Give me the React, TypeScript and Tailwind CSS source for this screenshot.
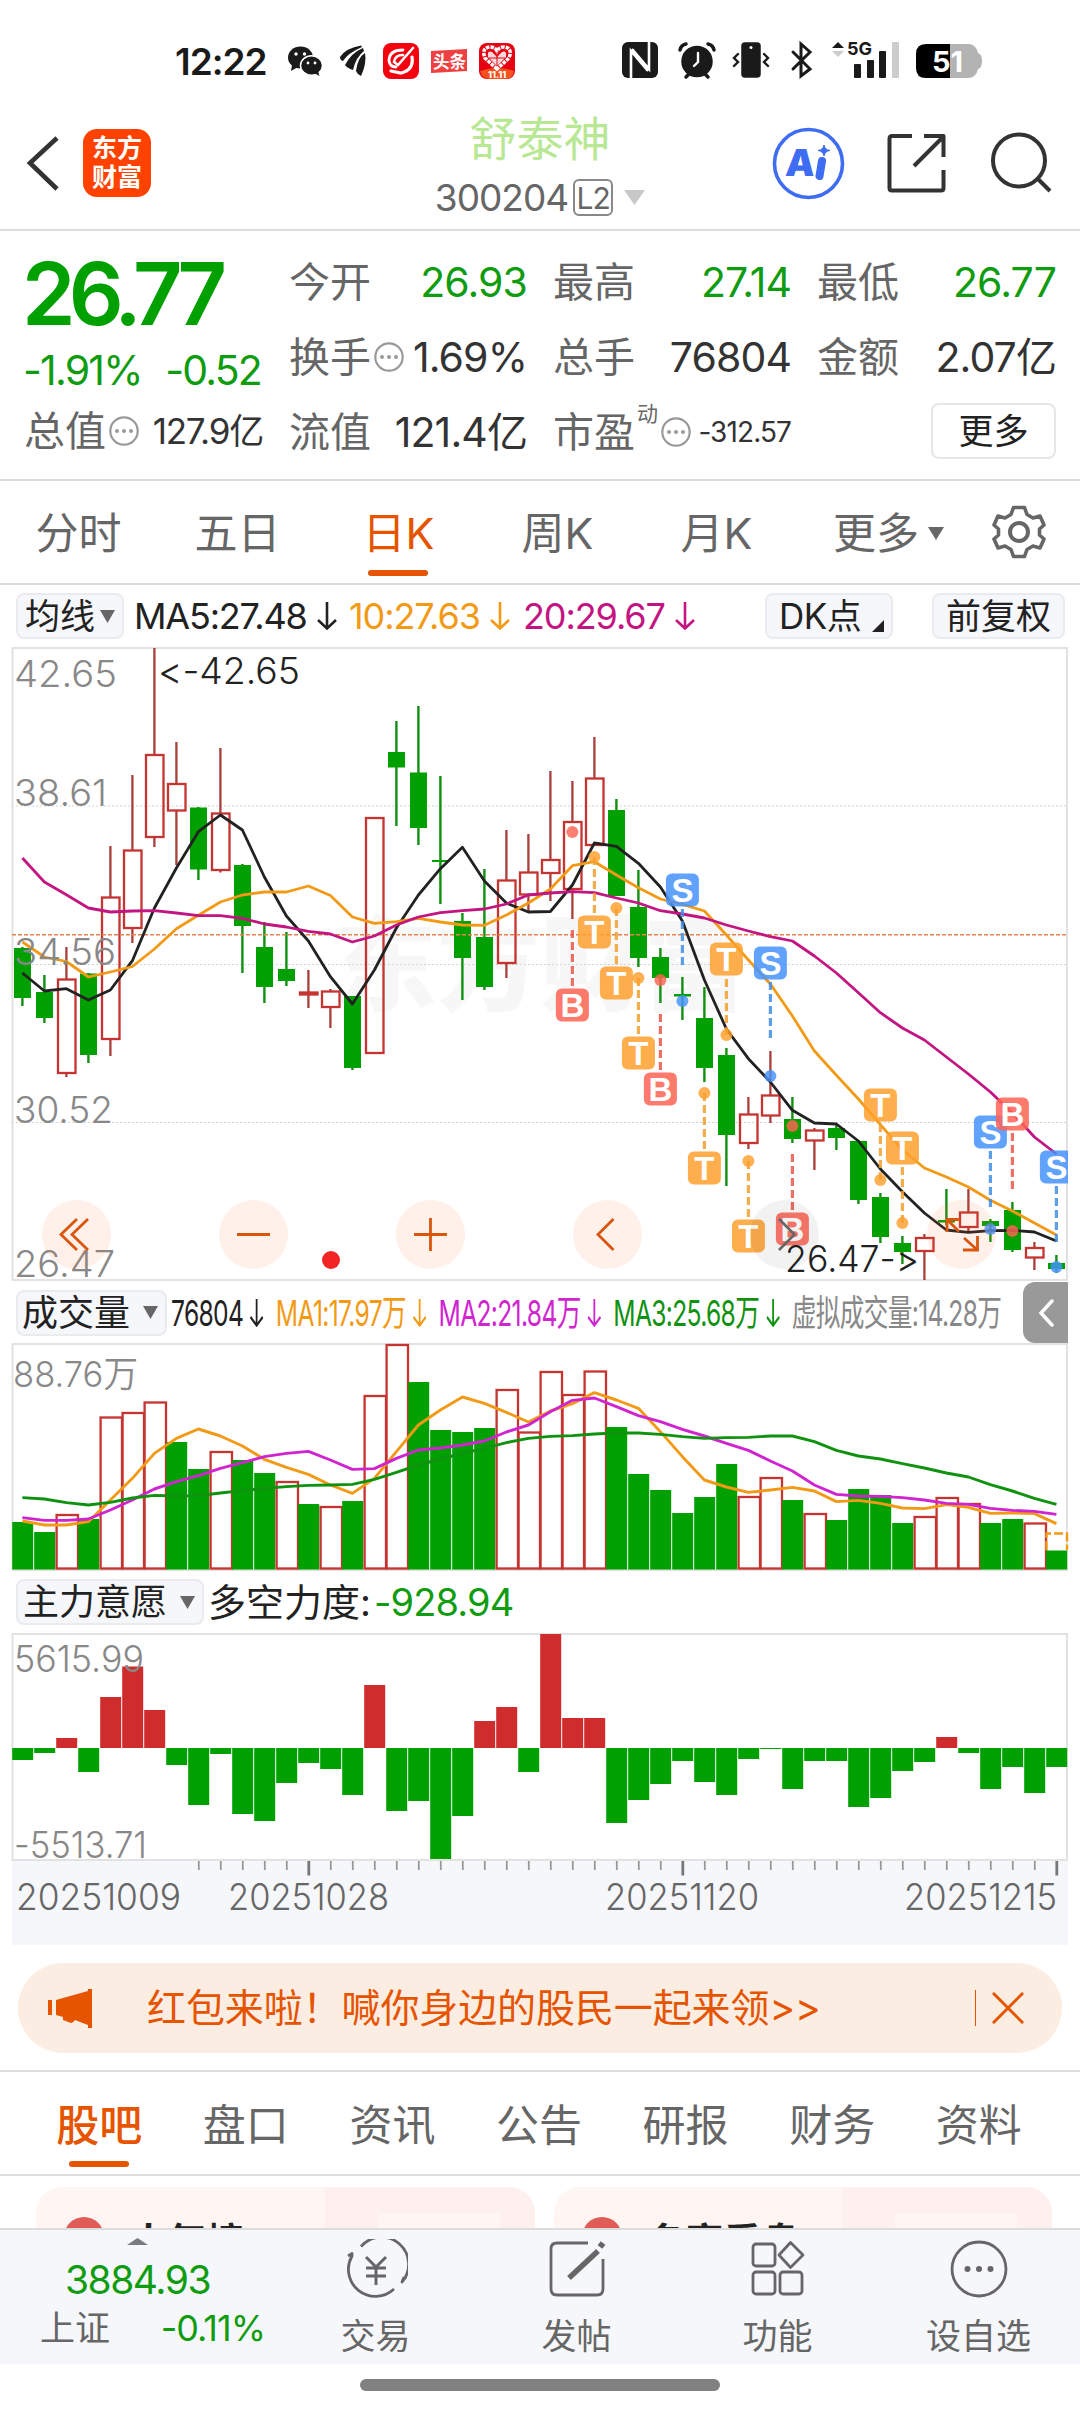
import type { ReactNode } from "react";

type Candle = [kind: "r" | "g", high: number, top: number, bottom: number, low: number];
type MarkKind = "B" | "S" | "T";

const STEP = 22;
const cx = (i: number) => 22.4 + i * STEP;

const candles: Candle[] = [
  ["g", 947, 948, 998, 1006],
  ["g", 975, 992, 1018, 1023],
  ["r", 947, 979.5, 1073, 1077],
  ["g", 973, 973.5, 1055, 1063],
  ["r", 846, 897.5, 1039, 1056],
  ["r", 775, 850.5, 928, 943],
  ["r", 648, 755, 837, 847],
  ["r", 742, 784, 810.5, 865],
  ["g", 807, 807.5, 869.5, 880],
  ["r", 748, 813.5, 870, 872.5],
  ["g", 864, 865, 926, 973],
  ["g", 922, 947, 987, 1003],
  ["g", 932, 969, 981, 986],
  ["r", 970, 992.5, 994.5, 1008],
  ["r", 989, 991.5, 1007, 1028],
  ["g", 996, 996, 1068, 1070],
  ["r", 818, 818, 1053, 1053],
  ["g", 721, 752, 767.5, 826],
  ["g", 706, 772.5, 828, 845],
  ["g", 776, 860, 862, 904],
  ["g", 913, 921, 958, 1000],
  ["g", 869, 937, 987, 990],
  ["r", 830, 880.5, 963, 978],
  ["r", 834, 872.5, 894.5, 912],
  ["r", 771, 860, 873, 901],
  ["r", 781, 822, 889, 919],
  ["r", 737, 778.5, 845, 845],
  ["g", 799, 810, 896, 896],
  ["g", 870, 907, 958, 967],
  ["g", 948, 957, 978, 1003],
  ["g", 977, 994, 996.5, 1020],
  ["g", 987, 1018, 1068, 1082],
  ["g", 1048, 1055, 1135, 1186],
  ["r", 1097, 1114.5, 1143, 1149],
  ["r", 1051, 1095.5, 1115.5, 1123],
  ["g", 1097, 1119, 1139, 1143],
  ["r", 1128, 1130.5, 1140.5, 1170],
  ["g", 1124, 1128, 1138, 1150],
  ["g", 1140, 1141, 1200, 1204],
  ["g", 1193, 1197, 1237, 1243],
  ["g", 1236, 1243, 1252, 1264],
  ["r", 1234, 1238, 1251, 1280],
  ["g", 1189, 1220, 1222.5, 1225],
  ["r", 1189, 1212.5, 1227, 1232],
  ["g", 1219, 1221, 1226, 1242],
  ["g", 1202, 1210, 1250, 1252],
  ["r", 1242, 1248, 1257.5, 1270],
  ["g", 1255, 1263, 1269, 1273],
];

const ma5 = [
  973, 991, 988.7, 1000, 990, 960.7, 908, 868, 831.7, 815, 830, 877, 916, 941, 976.7, 1004, 970, 928,
  895, 868.7, 847.3, 881, 903, 912, 911.5, 885, 843, 846.3, 863.3, 887, 921, 980, 1029, 1058.7, 1082,
  1110.3, 1123, 1124, 1141, 1169, 1191.7, 1213, 1230, 1232.3, 1230.7, 1230.3, 1232, 1241,
];
const ma10 = [
  942, 957, 961.5, 977, 972, 966.5, 949, 928.7, 915.3, 902, 895, 892, 892, 886, 895.5, 917, 923.3,
  921.7, 918.3, 922, 925, 925.3, 915, 903, 889, 865.7, 861.7, 875, 887.7, 899, 904.3, 911, 935, 960,
  984, 1016, 1051, 1075.3, 1099, 1124.7, 1150, 1168, 1177, 1187, 1200.3, 1211, 1223, 1235,
];
const ma20 = [
  858, 882, 894.7, 908, 912, 911, 910.7, 913, 915.7, 915.7, 918.3, 924, 927, 931.3, 934, 942, 936,
  925, 917, 912.7, 910.7, 909, 904, 895, 893, 891.7, 892.7, 898, 903, 910.7, 914, 918, 925, 931,
  936.7, 941, 956, 973, 992.7, 1012.7, 1028, 1040, 1057, 1074, 1092, 1113, 1137, 1154,
];

// index, kind, label centre, dot centre, dashes from, dashes to
const marks: [number, MarkKind, number, number, number, number][] = [
  [25, "B", 1005, 832, 930, 987],
  [26, "T", 932, 857, 857, 915],
  [27, "T", 983, 908, 908, 966],
  [28, "T", 1053, 978, 978, 1036],
  [29, "B", 1089, 980, 1014, 1071],
  [30, "S", 890, 1001, 909, 965],
  [31, "T", 1168, 1093, 1093, 1151],
  [32, "T", 959, 1035, 979, 1035],
  [33, "T", 1236, 1161, 1161, 1219],
  [34, "S", 963, 1076, 982, 1038],
  [35, "B", 1229, 1126, 1154, 1211],
  [39, "T", 1105, 1180, 1124, 1180],
  [40, "T", 1148, 1223, 1167, 1223],
  [44, "S", 1132, 1229, 1151, 1207],
  [45, "B", 1114, 1231, 1133, 1189],
  [47, "S", 1167, 1267, 1186, 1242],
];
const markFill = { B: "#fe6353", S: "#4592fd", T: "#fea02d" };
const markDash = { B: "#e8574a", S: "#3f8ee6", T: "#f0a030" };

const volumes: ["r" | "g", number][] = [
  ["g", 1522], ["g", 1532], ["r", 1515], ["g", 1519], ["r", 1417.5], ["r", 1413], ["r", 1402.5],
  ["g", 1442], ["g", 1469], ["r", 1452], ["g", 1460], ["g", 1473], ["r", 1482], ["g", 1504],
  ["r", 1507], ["g", 1501], ["r", 1396], ["r", 1345], ["g", 1382], ["g", 1430], ["g", 1432],
  ["g", 1428], ["r", 1390], ["r", 1432.5], ["r", 1372], ["r", 1395], ["r", 1371.5], ["g", 1427],
  ["g", 1474], ["g", 1490], ["g", 1513], ["g", 1497], ["g", 1464], ["r", 1497], ["r", 1478],
  ["g", 1500], ["r", 1514], ["g", 1520], ["g", 1489], ["g", 1495], ["g", 1523], ["r", 1517],
  ["r", 1498], ["r", 1504], ["g", 1523], ["g", 1519], ["r", 1523.5], ["g", 1550.5],
];

const vol1 = [
  708, 720, 720, 710, 645, 580, 505, 460, 432, 453, 483, 523, 547, 568, 600, 625, 580, 500, 420, 375,
  336, 355, 382, 411, 378, 356, 323, 345, 370, 440, 515, 585, 606, 622, 615, 607, 618, 650, 646, 655,
  669, 671, 659, 667, 685, 684, 686, 716,
].map((v) => 1285 + v / 3);
const vol2 = [
  698, 706, 706, 702, 675, 645, 612, 590, 572, 550, 533, 515, 505, 499, 525, 553, 551, 520, 495, 489,
  480, 468, 441, 420, 380, 346, 339, 365, 392, 410, 433, 453, 475, 496, 528, 558, 600, 628, 633, 634,
  638, 645, 655, 658, 670, 676, 679, 688,
].map((v) => 1285 + v / 3);
const vol3 = [
  638, 642, 653, 660, 652, 639, 631, 633, 632, 624, 617, 610, 605, 601, 600, 598, 583, 562, 540, 522,
  505, 490, 473, 460, 454, 452, 447, 444, 444, 448, 455, 460, 458, 457, 453, 453, 470, 496, 513, 522,
  536, 549, 564, 576, 599, 618, 640, 658,
].map((v) => 1285 + v / 3);

// bar length in px, positive is up
const force = [
  -12, -5, 10, -24, 51, 81.5, 38, -17, -57, -6, -66, -73, -35, -15, -21, -47, 63, -63, -53, -111, -68,
  27, 41, -24, 114, 30, 30, -75, -52, -36, -13, -34, -47, -11, -1, -41, -13, -13, -59, -50, -23, -14,
  11, -5, -41, -19, -45, -19,
];

const points = (ys: number[]) => ys.map((y, i) => `${cx(i)},${y}`).join(" ");

interface LabelProps {
  x: number;
  y: number;
  w?: number;
  fill?: string;
  size?: number;
  children: ReactNode;
}

function Label({ x, y, w, fill = "#888", size = 37, children }: LabelProps) {
  return (
    <text
      x={x} y={y} fill={fill} fontSize={size} fontWeight={350}
      textLength={w} lengthAdjust="spacingAndGlyphs" className="[font-feature-settings:'calt'_0]"
    >
      {children}
    </text>
  );
}

function Frame({ top, bottom }: { top: number; bottom: number }) {
  return (
    <rect x={12.5} y={top} width={1054.5} height={bottom - top} fill="none" stroke="#e2e2e2" strokeWidth={2} />
  );
}

function KLineChart() {
  return (
    <svg viewBox="0 647 1080 635" className="block h-[635px] w-[1080px] overflow-visible">
      <text x={334} y={1003} fontSize={103} fontWeight={900} fill="#f7f7f7">
        东方财富
      </text>
      <Frame top={648} bottom={1280} />
      {[806, 964.5, 1122.5].map((y) => (
        <line key={y} x1={12} x2={1067} y1={y} y2={y} stroke="#d4d4d4" strokeDasharray="2 2" />
      ))}
      {candles.map(([kind, high, top, bottom, low], i) =>
        kind === "g" ? (
          <g key={i} fill="#00a000">
            <rect x={cx(i) - 1.2} y={high} width={2.4} height={low - high} fill="#129012" />
            <rect x={cx(i) - 8.4} y={top} width={17} height={bottom - top} />
          </g>
        ) : (
          <g key={i} stroke="#c53430" strokeWidth={2.3}>
            <path d={`M${cx(i)} ${high}V${top}M${cx(i)} ${bottom}V${low}`} stroke="#a83f3b" />
            <rect x={cx(i) - 8.4} y={top} width={17.5} height={bottom - top} fill="none" />
          </g>
        )
      )}
      <line x1={12} x2={1067} y1={934.7} y2={934.7} stroke="#e8824c" strokeWidth={1.4} strokeDasharray="4 2" />
      <g fill="none" strokeWidth={2.8} strokeLinejoin="round">
        <polyline points={points(ma5)} stroke="#222" />
        <polyline points={points(ma10)} stroke="#f29a16" />
        <polyline points={points(ma20)} stroke="#c31581" />
      </g>
      <Label x={14} y={687} w={103}>42.65</Label>
      <Label x={14} y={806} w={93}>38.61</Label>
      <Label x={14} y={965} w={102}>34.56</Label>
      <Label x={14} y={1123} w={99}>30.52</Label>
      <Label x={14} y={1277} w={101}>26.47</Label>
      <Label x={158} y={684} w={142} fill="#222">{"<-42.65"}</Label>

      {marks.map(([i, kind, y, dot, from, to]) => (
        <g key={i}>
          <line
            x1={cx(i)} x2={cx(i)} y1={from} y2={to}
            stroke={markDash[kind]} strokeWidth={3.2} strokeDasharray="8 4" opacity={0.85}
          />
          <circle cx={cx(i)} cy={dot} r={6} fill={markFill[kind]} opacity={0.82} />
          <rect x={cx(i) - 16.5} y={y - 16.5} width={33} height={33} rx={6} fill={markFill[kind]} opacity={0.85} />
          <text
            x={cx(i)} y={y + 11.5} fontSize={33} fontWeight={700} textAnchor="middle"
            fill="#fff" className="font-['Liberation_Sans']"
          >
            {kind}
          </text>
        </g>
      ))}
      <rect x={1068} y={1140} width={12} height={50} fill="#fff" />

      <Label x={785} y={1272} w={134} fill="#222">{"26.47->"}</Label>

      {[76.5, 253.5, 430.5, 607.5, 961.5].map((x) => (
        <circle key={x} cx={x} cy={1234.5} r={34.5} fill="#fc6a2c" opacity={0.1} />
      ))}
      <circle cx={784.5} cy={1234.5} r={34.5} fill="#000" opacity={0.05} />
      <g fill="none" stroke="#d9560f" strokeWidth={2.8}>
        <path d="M77 1219L61 1234.5L77 1250M88 1219L72 1234.5L88 1250" />
        <path d="M237 1234.5H270M414 1234.5H447M430.5 1218V1251" />
        <path d="M613.5 1219L598 1234.5L613.5 1250" />
        <path d="M947 1232V1219.5H960M947 1219.5L959 1231.5M963 1250H977.5V1236M977.5 1250L964 1238" />
      </g>
      <path d="M779 1219L794.5 1234.5L779 1250" fill="none" stroke="#666" strokeWidth={2.6} />
      <circle cx={331} cy={1260} r={9} fill="#f22424" />
    </svg>
  );
}

function VolumeChart() {
  return (
    <svg viewBox="0 1343 1080 228" className="block h-[228px] w-[1080px]">
      <Frame top={1344} bottom={1570} />
      {volumes.map(([kind, y], i) =>
        kind === "g" ? (
          <rect key={i} x={12.2 + i * STEP} y={y} width={21} height={1569.5 - y} fill="#00a000" />
        ) : (
          <rect
            key={i} x={12.6 + i * STEP} y={y} width={21.4} height={1568.5 - y}
            fill="#fff" stroke="#c53430" strokeWidth={2.3}
          />
        )
      )}
      <path d="M1046.5 1550V1533.5H1067V1550" fill="none" stroke="#f29a16" strokeWidth={2.4} strokeDasharray="9 3" />
      <g fill="none" strokeWidth={2.9} strokeLinejoin="round">
        <polyline points={points(vol1)} stroke="#f29a16" />
        <polyline points={points(vol2)} stroke="#cf24cf" />
        <polyline points={points(vol3)} stroke="#0f920f" />
      </g>
      <Label x={13} y={1387} w={125} size={36}>88.76万</Label>
    </svg>
  );
}

function ForceChart() {
  const ticks = Array.from({ length: 40 }, (_, n) => n + 8);
  return (
    <svg viewBox="0 1633 1080 312" className="block h-[312px] w-[1080px]">
      <rect x={12} y={1860} width={1056} height={85} fill="#f6f7fa" />
      <Frame top={1634} bottom={1860} />
      {force.map((v, i) => (
        <rect
          key={i} x={12.2 + i * STEP} y={v > 0 ? 1748 - v : 1748} width={21} height={Math.abs(v)}
          fill={v > 0 ? "#cf2d2d" : "#00a000"}
        />
      ))}
      {ticks.map((i) => {
        const major = i === 13 || i === 30 || i === 47;
        return (
          <line
            key={i} x1={cx(i) + 0.4} x2={cx(i) + 0.4} y1={1861} y2={major ? 1875.5 : 1870}
            stroke={major ? "#777" : "#999"} strokeWidth={major ? 2.8 : 1.8}
          />
        );
      })}
      <Label x={14} y={1672} w={130}>5615.99</Label>
      <Label x={14} y={1857.5} w={133}>-5513.71</Label>
      <Label x={16} y={1909.5} w={165} fill="#666">20251009</Label>
      <Label x={228} y={1909.5} w={161} fill="#666">20251028</Label>
      <Label x={605} y={1909.5} w={154} fill="#666">20251120</Label>
      <Label x={904} y={1909.5} w={153} fill="#666">20251215</Label>
    </svg>
  );
}

function Down({ className }: { className: string }) {
  return (
    <svg viewBox="0 0 16 14" preserveAspectRatio="none" className={className}>
      <path d="M0 0H16L8 14Z" fill="currentColor" />
    </svg>
  );
}

function Arrow() {
  return (
    <svg viewBox="0 0 20 28" className="ml-[10px] h-7 w-5" fill="none" stroke="currentColor" strokeWidth="2.6">
      <path d="M10 0V26.5M1 18L10 26.5L19 18" />
    </svg>
  );
}

function Info() {
  return (
    <svg viewBox="0 0 30 30" className="ml-[3px] size-[30px] shrink-0 text-[#999]">
      <circle cx="15" cy="15" r="13.7" fill="none" stroke="currentColor" strokeWidth="2.2" />
      <path d="M8 15h.01M15 15h.01M22 15h.01" stroke="currentColor" strokeWidth="4" strokeLinecap="round" />
    </svg>
  );
}

function StatusBar() {
  return (
    <div className="flex h-[122px] items-center pl-[175px]">
      <span className="w-[113px] text-[37px] leading-none font-semibold tracking-[-1px] text-[#1a1a1a]">12:22</span>
      <svg viewBox="288 43 232 38" className="h-[38px] w-[232px] overflow-visible">
        <g fill="#1a1a1a">
          <ellipse cx="300.5" cy="58.5" rx="12.5" ry="11" />
          <path d="M292 66L291 72L298 68Z" />
          <ellipse cx="311.5" cy="66.5" rx="11" ry="9.8" stroke="#fff" strokeWidth="1.5" />
          <path d="M314 74L319.5 77L318 72Z" />
          <path d="M340 58Q346 49 361 46.500L362 48Q348 54 343 62Q340 61 340 58ZM345 66Q351 54 363 49L364 52Q356 58 353 71Q347 69 345 66ZM356 72Q358 58 365 54Q367 64 361 77Q357 75 356 72Z" />
        </g>
        <g fill="#fff">
          <circle cx="296" cy="55" r="1.7" />
          <circle cx="304.5" cy="55" r="1.7" />
          <circle cx="308" cy="64" r="1.4" />
          <circle cx="315" cy="64" r="1.4" />
        </g>
        <rect x="383" y="44" width="36" height="36" rx="8" fill="#f5000f" />
        <g fill="none" stroke="#fff" strokeLinecap="round">
          <path d="M403 51Q389 51 389 62Q390 68 396 68" strokeWidth="2.8" />
          <path d="M403 56Q395 56 394 63L398 66L413 49" strokeWidth="2.6" />
          <path d="M412 58Q414 71 401 74L391 72" strokeWidth="3.2" />
        </g>
        <path d="M431 52L467 50V72L431 74Z" fill="#f04142" />
        <text x="433" y="68.5" fontSize="16.5" fontWeight="700" fill="#fff">头条</text>
        <rect x="479" y="44" width="36" height="36" rx="8" fill="#e60012" />
        <path d="M480 72Q482 80 490 80H505Q513 80 514 72Q497 66 480 72Z" fill="#f4511e" />
        <path
          d="M497 70L485 59Q481 49 490 48Q495 48 497 52Q499 48 504 48Q513 49 509 59Z"
          fill="none" stroke="#fff" strokeWidth="3.5" strokeDasharray="3.5 1"
        />
        <path d="M497 67L488 58Q487 51 492 53L497 58L502 53Q507 51 506 58Z" fill="#fff" opacity=".85" />
        <path d="M489 59H505M497 53V67" stroke="#e60012" strokeWidth="1" />
        <text x="488" y="78.5" fontSize="9" fontWeight="800" fill="#fff">11.11</text>
      </svg>
      <svg viewBox="620 42 364 40" className="ml-[100px] h-10 w-[364px] overflow-visible">
        <rect x="622" y="43" width="36" height="36" rx="6" fill="#1a1a1a" />
        <path d="M631 79V52L648 72M649 43V70L632 50" fill="none" stroke="#fff" strokeWidth="2.6" />
        <g fill="none" stroke="#1a1a1a" strokeWidth="3.5" strokeLinecap="round">
          <circle cx="697" cy="62.5" r="14" fill="#1a1a1a" />
          <path d="M680 51Q681 46 686 45M714 51Q713 46 708 45M689 75L686 78M705 75L708 78" />
          <path d="M698 54V63L694 67" stroke="#fff" strokeWidth="2.4" />
          <rect x="743" y="45" width="16" height="32" rx="2" fill="#1a1a1a" />
          <path d="M738 55L734 59L738 63L734 67M764 55L768 59L764 63L768 67" strokeWidth="2.4" />
          <path d="M793 53L810 70L801 77V45L810 53L793 70" strokeWidth="3" />
        </g>
        <circle cx="751" cy="48.5" r="1.5" fill="#fff" />
        <path d="M832 49L838 43L844 49Z" fill="#1a1a1a" />
        <path d="M832 52L838 58L844 52Z" fill="#ccc" />
        <text x="847" y="56" fontSize="18" fontWeight="700" fill="#1a1a1a" textLength="25">5G</text>
        <g fill="#1a1a1a">
          <rect x="854" y="65" width="7" height="14" rx="1" />
          <rect x="867" y="61" width="7" height="18" rx="1" />
          <rect x="879" y="52" width="7" height="27" rx="1" />
          <rect x="892" y="43" width="7" height="36" rx="1" fill="#ccc" />
        </g>
        <path d="M926 45H950V79H926Q916 79 916 69V55Q916 45 926 45Z" fill="#000" />
        <path d="M950 45H968Q976 45 978 54Q982 55 982 62Q982 69 978 70Q976 79 968 79H950Z" fill="#b3b3b3" />
        <text x="932" y="72.500" fontSize="29" fontWeight="700" fill="#fff" textLength="31">51</text>
      </svg>
    </div>
  );
}

function Header() {
  return (
    <div className="flex h-[109px] justify-between border-b-2 border-[#dcdcdc] pr-[28px] pl-[26px]">
      <div className="flex w-[300px] items-start pt-[7px]">
        <svg viewBox="0 0 34 60" className="mt-1 h-[60px] w-[34px]" fill="none" stroke="#333" strokeWidth="4.600">
          <path d="M31 5L4 30L31 56" />
        </svg>
        <div className="ml-[23px] flex h-[68px] w-[68px] flex-col items-center justify-center rounded-[14px] bg-[#ff4200] text-[25px] leading-[29px] font-bold text-white">
          <span>东方</span>
          <span>财富</span>
        </div>
      </div>
      <div className="-mt-[8px] flex flex-col items-center">
        <h1 className="text-[47px] leading-[50px] text-[#b9e895]">舒泰神</h1>
        <div className="mt-[15px] flex items-center text-[#666]">
          <span className="text-[37px] leading-none tracking-[-1px]">300204</span>
          <span className="ml-[5px] flex h-[37px] w-10 items-center justify-center rounded-md border-2 border-[#888] text-[30px] leading-none tracking-[-1px]">
            L2
          </span>
          <Down className="ml-[11px] h-[15px] w-[21px] text-[#c8c8c8]" />
        </div>
      </div>
      <div className="flex w-[298px] items-start justify-end pt-[5px]">
        <svg viewBox="772 127 280 74" className="h-[74px] w-[280px]" fill="none">
          <circle cx="808.5" cy="163.5" r="34" stroke="#3e6cf2" strokeWidth="3.6" />
          <text x="785" y="176" fontSize="37" fontWeight="900" fill="#3e6cf2" transform="skewX(-4) translate(12 0)">A</text>
          <path d="M822 161L819.5 176" stroke="#3e6cf2" strokeWidth="8" strokeLinecap="round" />
          <path d="M824 145Q825 150 830 150.5Q825 151 824 156Q823 151 818 150.5Q823 150 824 145Z" fill="#3e6cf2" stroke="#3e6cf2" />
          <g stroke="#333" strokeWidth="4" strokeLinejoin="round">
            <path d="M912 136H892Q889.5 136 889.5 139V188Q889.5 190.5 892 190.5H941Q943.5 190.5 943.5 188V170" />
            <path d="M924 136H943.5V157M943 137L914 166" />
            <circle cx="1019" cy="160.5" r="26" />
            <path d="M1038 179L1050 191" />
          </g>
        </svg>
      </div>
    </div>
  );
}

interface StatProps {
  label: string;
  value: string;
  green?: boolean;
  info?: boolean;
  sup?: string;
  valueClass?: string;
}

function Stat({ label, value, green, info, sup, valueClass = "text-[41px] tracking-[-0.9px]" }: StatProps) {
  return (
    <div className="flex h-[46px] items-center whitespace-nowrap">
      <span className="text-[41px] leading-none text-[#666]">{label}</span>
      {sup && <span className="-mt-[38px] ml-[2px] text-[21px] leading-none text-[#666]">{sup}</span>}
      {info && <Info />}
      <span className={`ml-auto leading-none ${green ? "text-[#109c10]" : "text-[#333]"} ${valueClass}`}>{value}</span>
    </div>
  );
}

function Quote() {
  return (
    <div className="grid h-[250px] grid-cols-[238px_238px_238px_239px] gap-x-[26px] border-b-2 border-[#dcdcdc] pt-[28px] pl-[25px]">
      <div className="flex flex-col">
        <span className="-ml-[3px] text-[86px] leading-[70px] font-semibold tracking-[-6.8px] text-[#00a000]">26.77</span>
        <div className="mt-[18px] flex h-[46px] items-center justify-between pr-[2px] text-[41px] leading-none tracking-[-1.8px] text-[#109c10]">
          <span className="-ml-[2px]">-1.91%</span>
          <span>-0.52</span>
        </div>
        <div className="mt-[15px] -ml-px">
          <Stat label="总值" value="127.9亿" info valueClass="text-[35px] tracking-[-1.2px]" />
        </div>
      </div>
      <div className="flex flex-col gap-[29px]">
        <Stat label="今开" value="26.93" green />
        <Stat label="换手" value="1.69%" info />
        <Stat label="流值" value="121.4亿" />
      </div>
      <div className="flex flex-col gap-[29px]">
        <Stat label="最高" value="27.14" green />
        <Stat label="总手" value="76804" />
        <Stat label="市盈" value="-312.57" info sup="动" valueClass="text-[28px] tracking-[-0.9px]" />
      </div>
      <div className="flex flex-col gap-[29px]">
        <Stat label="最低" value="26.77" green />
        <Stat label="金额" value="2.07亿" />
        <div className="-mt-[6px] flex h-[56px] w-[125px] items-center justify-center self-end rounded-lg border-2 border-[#e6e6e6] text-[35px] leading-none text-[#222]">
          更多
        </div>
      </div>
    </div>
  );
}

const periods = [
  { name: "分时", width: "w-[157px]" },
  { name: "五日", width: "w-[161px]" },
  { name: "日K", width: "w-[161px]" },
  { name: "周K", width: "w-[157px]" },
  { name: "月K", width: "w-[161px]" },
];

function PeriodTabs() {
  return (
    <div className="flex h-[104px] items-center border-b-2 border-[#dcdcdc] pt-[2px] text-[43px] leading-none text-[#666]">
      {periods.map((p, i) => (
        <div
          key={p.name}
          className={`relative flex h-full items-center justify-center ${p.width} ${i === 2 ? "text-[#e65400]" : ""}`}
        >
          {p.name}
          {i === 2 && <span className="absolute bottom-[7px] left-[50px] h-[6px] w-[60px] rounded-full bg-[#e65400]" />}
        </div>
      ))}
      <div className="ml-[36px] flex items-center">
        更多
        <Down className="ml-[9px] h-[13px] w-4" />
      </div>
      <svg viewBox="-27 -27 54 54" className="-mt-[3px] ml-auto mr-[34px] size-[54px]" fill="none" stroke="#666" strokeWidth="3.6" strokeLinejoin="round">
        <path d="M-5.5 -24.5H5.5L8 -17.5L14 -14L21 -16L25 -7L20.5 -3V3L25 7L21 16L14 14L8 17.5L5.5 24.5H-5.5L-8 17.5L-14 14L-21 16L-25 7L-20.5 3V-3L-25 -7L-21 -16L-14 -14L-8 -17.5Z" />
        <circle r="9" strokeWidth="4" />
      </svg>
    </div>
  );
}

const chip = "flex h-[46px] shrink-0 items-center rounded-lg border-2 border-[#e9ebee] bg-[#f6f7fa] leading-none text-[#222]";

function AverageRow() {
  return (
    <div className="flex h-[62px] items-center pr-[15px] pl-4 text-[36px] leading-none whitespace-nowrap">
      <div className={`${chip} w-[108px] pl-[7px] text-[35px]`}>
        均线
        <Down className="ml-[5px] h-[13px] w-[15px] text-[#666]" />
      </div>
      <div className="ml-[10px] flex w-[215px] items-center tracking-[-1.2px] text-[#222]">
        MA5:27.48
        <Arrow />
      </div>
      <div className="flex w-[174px] items-center tracking-[-1.1px] text-[#f29a16]">
        10:27.63
        <Arrow />
      </div>
      <div className="flex items-center tracking-[-1.1px] text-[#c31581]">
        20:29.67
        <Arrow />
      </div>
      <div className={`${chip} ml-auto w-[128px] pl-[12px] text-[35px] tracking-[-0.5px]`}>
        DK点
        <svg viewBox="0 0 12 12" className="mt-[20px] ml-[11px] size-3">
          <path d="M12 0V12H0Z" fill="#222" />
        </svg>
      </div>
      <div className={`${chip} ml-[39px] w-[133px] justify-center text-[35px]`}>前复权</div>
    </div>
  );
}

function VolumeRow() {
  return (
    <div className="flex h-[61px] items-center pl-4">
      <div className={`${chip} w-[151px] pl-[4px] text-[36px]`}>
        成交量
        <Down className="ml-[13px] h-[13px] w-[15px] text-[#666]" />
      </div>
      <div className="ml-[4px] w-[852px]">
        <div className="flex w-[1212px] origin-left scale-x-[0.685] items-center justify-between text-[36px] leading-none tracking-[-1px] whitespace-nowrap">
          <span className="flex items-center text-[#222]">76804<Arrow /></span>
          <span className="flex items-center text-[#f29a16]">MA1:17.97万<Arrow /></span>
          <span className="flex items-center text-[#cf24cf]">MA2:21.84万<Arrow /></span>
          <span className="flex items-center text-[#0f920f]">MA3:25.68万<Arrow /></span>
          <span className="text-[#888]">虚拟成交量:14.28万</span>
        </div>
      </div>
      <div className="flex h-[61px] w-[45px] shrink-0 items-center justify-center rounded-l-xl bg-[#999]">
        <svg viewBox="0 0 16 28" className="h-7 w-4" fill="none" stroke="#fff" strokeWidth="3.5" strokeLinecap="round">
          <path d="M14 2L3 14L14 26" />
        </svg>
      </div>
    </div>
  );
}

function ForceRow() {
  return (
    <div className="flex h-[62px] items-center pl-4 leading-none">
      <div className={`${chip} w-[188px] pl-[5px] text-[36px]`}>
        主力意愿
        <Down className="ml-[13px] h-[13px] w-[15px] text-[#666]" />
      </div>
      <span className="ml-[4px] text-[38px] text-[#222]">多空力度:</span>
      <span className="ml-[3px] text-[38px] tracking-[-0.9px] text-[#109c10]">-928.94</span>
    </div>
  );
}

function Banner() {
  return (
    <div className="h-[127px] border-b-2 border-[#dcdcdc] px-[18px] pt-[18px]">
      <div className="flex h-[90px] items-center rounded-full bg-[#fcede3] pr-[38px] pb-px pl-[29px] text-[#e65400]">
        <svg viewBox="0 0 46 40" className="h-10 w-[46px]" fill="currentColor">
          <path d="M1 12H5V27H1ZM9 12L41 3V1H45V40H41V37L28 32Q26 35 24 35L16 32V29L9 27Z" />
        </svg>
        <span className="ml-[54px] text-[39px] leading-none tracking-[-0.1px]">红包来啦！喊你身边的股民一起来领&gt;&gt;</span>
        <span className="ml-auto h-9 w-px bg-[#e65400]" />
        <svg viewBox="0 0 32 32" className="ml-4 size-8" stroke="currentColor" strokeWidth="3">
          <path d="M1 1L31 31M31 1L1 31" />
        </svg>
      </div>
    </div>
  );
}

const sections = ["股吧", "盘口", "资讯", "公告", "研报", "财务", "资料"];

function SectionTabs() {
  return (
    <div className="flex h-[104px] border-b-2 border-[#dcdcdc] pr-[28px] pl-[26px] text-[43px] leading-none text-[#666]">
      {sections.map((name, i) => (
        <div
          key={name}
          className={`relative flex flex-1 items-center justify-center pt-[5px] ${i === 0 ? "font-medium text-[#e65400]" : ""}`}
        >
          {name}
          {i === 0 && <span className="absolute bottom-[7px] h-[6px] w-[60px] rounded-full bg-[#e65400]" />}
        </div>
      ))}
    </div>
  );
}

function Card({ title }: { title: string }) {
  return (
    <div className="relative flex h-[120px] flex-1 rounded-[26px] bg-[#fff5f3] pt-[30px] pl-[28px]">
      <span className="absolute top-0 right-0 h-full w-[210px] rounded-tr-[26px] bg-[#fef0ee]" />
      <span className="absolute top-[26px] right-[35px] h-full w-[122px] bg-[#fff5f3]" />
      <span className="relative size-[40px] rounded-full bg-[#e05c57]" />
      <span className="relative mt-[2px] ml-[26px] text-[38px] leading-[44px] font-bold text-[#222]">{title}</span>
    </div>
  );
}

function NavItem({ label, children }: { label: string; children: ReactNode }) {
  return (
    <div className="flex w-[201px] flex-col items-center pt-[9px] text-[35px] leading-none text-[#666]">
      <svg viewBox="0 0 64 60" className="h-[60px] w-16" fill="none" stroke="#666" strokeWidth="2.8" strokeLinejoin="round">
        {children}
      </svg>
      <span className="mt-[20px]">{label}</span>
    </div>
  );
}

function BottomNav() {
  return (
    <div className="relative flex h-[136px] border-t-2 border-[#dcdcdc] bg-[#f6f7fa]">
      <div className="flex w-[275px] flex-col items-center pt-[8px]">
        <Down className="h-[7px] w-[21px] rotate-180 text-[#7a7a82]" />
        <span className="mt-[13px] text-[39px] leading-[44px] tracking-[-1.5px] text-[#109c10]">3884.93</span>
        <div className="mt-[8px] flex w-full items-center justify-between pr-[10px] pl-[40px] leading-none">
          <span className="text-[35px] text-[#666]">上证</span>
          <span className="text-[36px] tracking-[-1px] text-[#109c10]">-0.11%</span>
        </div>
      </div>
      <NavItem label="交易">
        <path d="M17 8.5A27 27 0 0 1 58 44L60 39M4 18L8 15.5V18A27 27 0 0 0 50 51M58 44L62 39" transform="translate(0 -1)" />
        <path d="M22 18L32 28L42 18M32 28V46M22 29H42M22 37H42" strokeWidth="3" />
      </NavItem>
      <NavItem label="发帖">
        <path d="M43 4H12Q6 4 6 10V50Q6 56 12 56H52Q58 56 58 50V20" />
        <path d="M53 12L24 39" strokeWidth="5.5" />
        <path d="M55 8L58 4" strokeWidth="6" />
      </NavItem>
      <NavItem label="功能">
        <rect x="7" y="5" width="22" height="22" rx="3" />
        <path d="M44.5 3.5L57 16L44.5 28.5L33 16Z" />
        <rect x="7" y="33" width="22" height="22" rx="3" />
        <rect x="34" y="33" width="22" height="22" rx="3" />
      </NavItem>
      <NavItem label="设自选">
        <circle cx="32" cy="30" r="27" />
        <path d="M20.5 30h.01M32 30h.01M43.5 30h.01" strokeWidth="6" strokeLinecap="round" />
      </NavItem>
    </div>
  );
}

export default function App() {
  return (
    <div className="h-[2412px] w-[1080px] overflow-hidden bg-white font-['Inter','Noto_Sans_CJK_SC',sans-serif]">
      <StatusBar />
      <Header />
      <Quote />
      <PeriodTabs />
      <AverageRow />
      <KLineChart />
      <VolumeRow />
      <VolumeChart />
      <ForceRow />
      <ForceChart />
      <Banner />
      <SectionTabs />
      <div className="flex h-[52px] gap-[19px] overflow-hidden pt-[11px] pr-[28px] pl-[36px]">
        <Card title="人气榜" />
        <Card title="名家看盘" />
      </div>
      <BottomNav />
      <div className="flex h-12 justify-center pt-[15px]">
        <div className="h-3 w-[360px] rounded-full bg-[#808080]" />
      </div>
    </div>
  );
}
